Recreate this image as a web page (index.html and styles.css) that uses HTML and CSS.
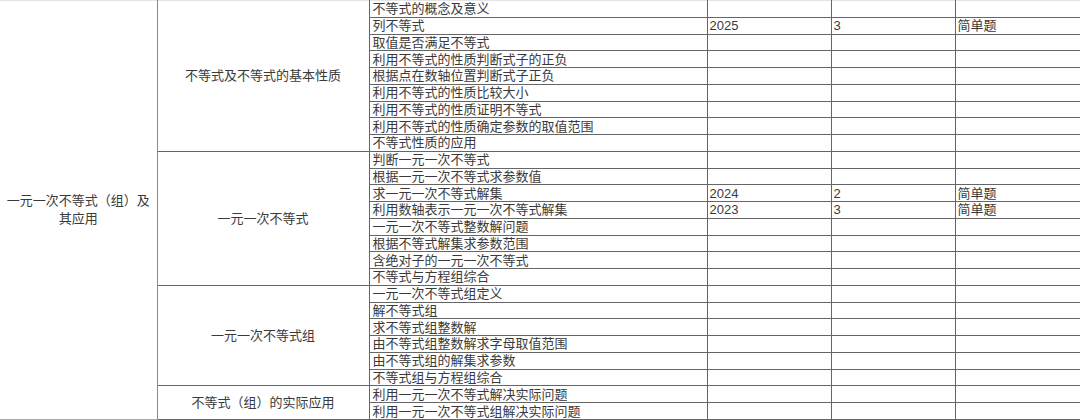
FILE: index.html
```html
<!DOCTYPE html>
<html lang="zh-CN">
<head>
<meta charset="utf-8">
<title>一元一次不等式（组）及其应用</title>
<link rel="stylesheet" href="styles.css">
</head>
<body>
<table class="sheet">
  <colgroup>
    <col class="c1"><col class="c2"><col class="c3"><col class="c4"><col class="c5"><col class="c6">
  </colgroup>
  <tbody>
    <tr>
      <td class="chapter" rowspan="25">一元一次不等式（组）及其应用</td>
      <td class="section" rowspan="9">不等式及不等式的基本性质</td>
      <td class="topic">不等式的概念及意义</td><td></td><td></td><td></td>
    </tr>
    <tr><td class="topic">列不等式</td><td>2025</td><td>3</td><td>简单题</td></tr>
    <tr><td class="topic">取值是否满足不等式</td><td></td><td></td><td></td></tr>
    <tr><td class="topic">利用不等式的性质判断式子的正负</td><td></td><td></td><td></td></tr>
    <tr><td class="topic">根据点在数轴位置判断式子正负</td><td></td><td></td><td></td></tr>
    <tr><td class="topic">利用不等式的性质比较大小</td><td></td><td></td><td></td></tr>
    <tr><td class="topic">利用不等式的性质证明不等式</td><td></td><td></td><td></td></tr>
    <tr><td class="topic">利用不等式的性质确定参数的取值范围</td><td></td><td></td><td></td></tr>
    <tr><td class="topic">不等式性质的应用</td><td></td><td></td><td></td></tr>
    <tr>
      <td class="section" rowspan="8">一元一次不等式</td>
      <td class="topic">判断一元一次不等式</td><td></td><td></td><td></td>
    </tr>
    <tr><td class="topic">根据一元一次不等式求参数值</td><td></td><td></td><td></td></tr>
    <tr><td class="topic">求一元一次不等式解集</td><td>2024</td><td>2</td><td>简单题</td></tr>
    <tr><td class="topic">利用数轴表示一元一次不等式解集</td><td>2023</td><td>3</td><td>简单题</td></tr>
    <tr><td class="topic">一元一次不等式整数解问题</td><td></td><td></td><td></td></tr>
    <tr><td class="topic">根据不等式解集求参数范围</td><td></td><td></td><td></td></tr>
    <tr><td class="topic">含绝对子的一元一次不等式</td><td></td><td></td><td></td></tr>
    <tr><td class="topic">不等式与方程组综合</td><td></td><td></td><td></td></tr>
    <tr>
      <td class="section" rowspan="6">一元一次不等式组</td>
      <td class="topic">一元一次不等式组定义</td><td></td><td></td><td></td>
    </tr>
    <tr><td class="topic">解不等式组</td><td></td><td></td><td></td></tr>
    <tr><td class="topic">求不等式组整数解</td><td></td><td></td><td></td></tr>
    <tr><td class="topic">由不等式组整数解求字母取值范围</td><td></td><td></td><td></td></tr>
    <tr><td class="topic">由不等式组的解集求参数</td><td></td><td></td><td></td></tr>
    <tr><td class="topic">不等式组与方程组综合</td><td></td><td></td><td></td></tr>
    <tr>
      <td class="section" rowspan="2">不等式（组）的实际应用</td>
      <td class="topic">利用一元一次不等式解决实际问题</td><td></td><td></td><td></td>
    </tr>
    <tr><td class="topic">利用一元一次不等式组解决实际问题</td><td></td><td></td><td></td></tr>
  </tbody>
</table>
</body>
</html>
```
FILE: styles.css
```css
html, body {
  margin: 0;
  padding: 0;
  background: #ffffff;
}

.sheet {
  width: 1080px;
  height: 420px;
  border-collapse: collapse;
  table-layout: fixed;
  font-family: "Liberation Sans", "Noto Sans CJK SC", sans-serif;
  font-size: 13px;
  color: #3a3a3a;
}

.c1 { width: 157px; }
.c2 { width: 212px; }
.c3 { width: 338px; }
.c4 { width: 124px; }
.c5 { width: 124px; }
.c6 { width: 125px; }

.sheet td {
  border: 1px solid #666666;
  padding: 0 2px;
  height: 15px;
  line-height: 15px;
  white-space: nowrap;
  overflow: hidden;
  vertical-align: middle;
}

.sheet tr:first-child td {
  border-top: 1px solid #e4e4e4;
}

.sheet td.chapter {
  border-left: none;
  border-right: 1px solid #888888;
  border-bottom: 1px solid #aaaaaa;
  white-space: normal;
  text-align: center;
  line-height: 18px;
  padding: 0 4px;
}

.sheet td.section {
  text-align: center;
  border-left: 1px solid #888888;
}

.sheet td.topic {
  padding-left: 3px;
}
```
